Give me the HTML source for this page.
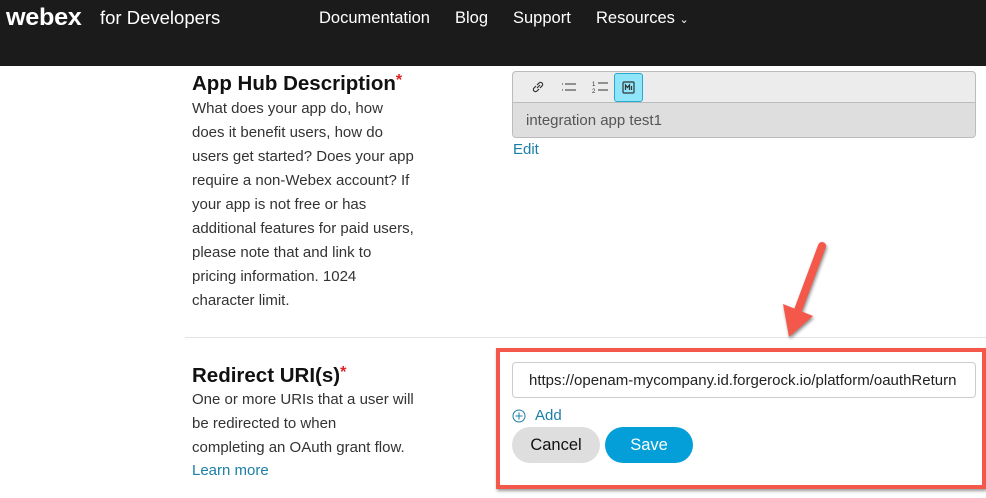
<!DOCTYPE html>
<html><head><meta charset="utf-8"><style>
*{margin:0;padding:0;box-sizing:border-box}
body{width:986px;height:498px;overflow:hidden;background:#fff;font-family:"Liberation Sans",Arial,sans-serif;position:relative;color:#222}
.hdr{position:absolute;left:0;top:0;width:986px;height:66px;background:#1b1b1b;color:#fff}
.logo{position:absolute;left:6px;top:4px;font-size:24px;font-weight:bold;letter-spacing:-0.3px;transform:scaleX(1.05);transform-origin:left}
.fd{position:absolute;left:100px;top:7px;font-size:18.5px}
.nav{position:absolute;top:9px;font-size:16.5px}
.a{position:absolute}
h2{position:absolute;left:192px;font-size:20.5px;font-weight:bold;color:#111}
h2 span{color:#e02020;font-size:16px;vertical-align:top}
.p{position:absolute;left:192px;font-size:15px;line-height:24px;color:#333;white-space:nowrap}
.link{color:#1a7fa6}
.div{position:absolute;left:185px;top:337px;width:801px;height:1px;background:#e4e4e4}
</style></head><body>
<div class="hdr">
<div class="logo">webex</div><div class="fd">for Developers</div>
<div class="nav" style="left:319px">Documentation</div>
<div class="nav" style="left:455px">Blog</div>
<div class="nav" style="left:513px">Support</div>
<div class="nav" style="left:596px">Resources <span style="font-size:11px">&#8964;</span></div>
</div>

<h2 style="top:72px">App Hub Description<span>*</span></h2>
<div class="p" style="top:97px">What does your app do, how<br>does it benefit users, how do<br>users get started? Does your app<br>require a non-Webex account? If<br>your app is not free or has<br>additional features for paid users,<br>please note that and link to<br>pricing information. 1024<br>character limit.</div>

<div class="a" style="left:512px;top:71px;width:464px;height:67px;border:1px solid #bbb;border-radius:4px;background:#ececec;overflow:hidden">
 <div style="position:absolute;left:0;top:30px;width:100%;height:36px;background:#dedede;border-top:1px solid #bbb"></div>
 <div style="position:absolute;left:13px;top:40px;font-size:15px;color:#555">integration app test1</div>
 <svg style="position:absolute;left:18px;top:8px" width="14" height="14" viewBox="0 0 14 14" fill="none" stroke="#333" stroke-width="1.2"><path d="M6 8l3-3M5 6L3 8a2 2 0 003 3l2-2M9 8l2-2a2 2 0 00-3-3L6 5"/></svg>
 <svg style="position:absolute;left:48px;top:9px" width="16" height="12" viewBox="0 0 16 12" stroke="#333" stroke-width="1"><path d="M4 3h11M4 9h11M1 3h1M1 9h1"/></svg>
 <svg style="position:absolute;left:78px;top:7px" width="18" height="16" viewBox="0 0 18 16" stroke="#333" stroke-width="1"><path d="M7 4h10M7 11h10"/><text x="1" y="7" font-size="6" fill="#333" stroke="none">1</text><text x="1" y="14" font-size="6" fill="#333" stroke="none">2</text></svg>
 <div style="position:absolute;left:101px;top:1px;width:29px;height:29px;background:#8fe6fb;border:1px solid #2aa7d0;border-radius:3px"><svg style="position:absolute;left:7px;top:7px" width="13" height="13" viewBox="0 0 13 13" fill="none" stroke="#333" stroke-width="1.2"><rect x="1" y="1" width="11" height="11" rx="1"/><path d="M3.5 9V4l2 2.5 2-2.5v5M9.5 5v4"/></svg></div>
</div>
<div class="a link" style="left:513px;top:141px;font-size:15px">Edit</div>

<div class="div"></div>

<h2 style="top:364px">Redirect URI(s)<span>*</span></h2>
<div class="p" style="top:388px">One or more URIs that a user will<br>be redirected to when<br>completing an OAuth grant flow.</div>
<div class="a link" style="left:192px;top:462px;font-size:15px">Learn more</div>

<div class="a" style="left:496px;top:348px;width:490px;height:141px;border:4px solid #f4584a;box-shadow:1px 2px 3px rgba(0,0,0,.4)"></div>
<div class="a" style="left:512px;top:362px;width:464px;height:36px;border:1px solid #ccc;border-radius:4px;font-size:15px;padding:9px 0 0 16px;color:#222;white-space:nowrap">https://openam-mycompany.id.forgerock.io/platform/oauthReturn</div>
<svg class="a" style="left:512px;top:409px" width="14" height="14" viewBox="0 0 14 14" fill="none" stroke="#1a7fa6" stroke-width="1"><circle cx="7" cy="7" r="6"/><path d="M7 3.5v7M3.5 7h7"/></svg>
<div class="a link" style="left:535px;top:407px;font-size:15px">Add</div>
<div class="a" style="left:512px;top:427px;width:88px;height:36px;border-radius:18px;background:#dedede;font-size:16.5px;text-align:center;line-height:36px;color:#111">Cancel</div>
<div class="a" style="left:605px;top:427px;width:88px;height:36px;border-radius:18px;background:#049fd9;font-size:16.5px;text-align:center;line-height:36px;color:#fff">Save</div>

<svg class="a" style="left:770px;top:235px;filter:drop-shadow(1px 2px 1.5px rgba(0,0,0,.45))" width="70" height="112" viewBox="770 235 70 112">
<path d="M822 246L797 313" stroke="#f4584a" stroke-width="8" stroke-linecap="round"/>
<path d="M783 304L789 337L813 316Z" fill="#f4584a"/>
</svg>
</body></html>
